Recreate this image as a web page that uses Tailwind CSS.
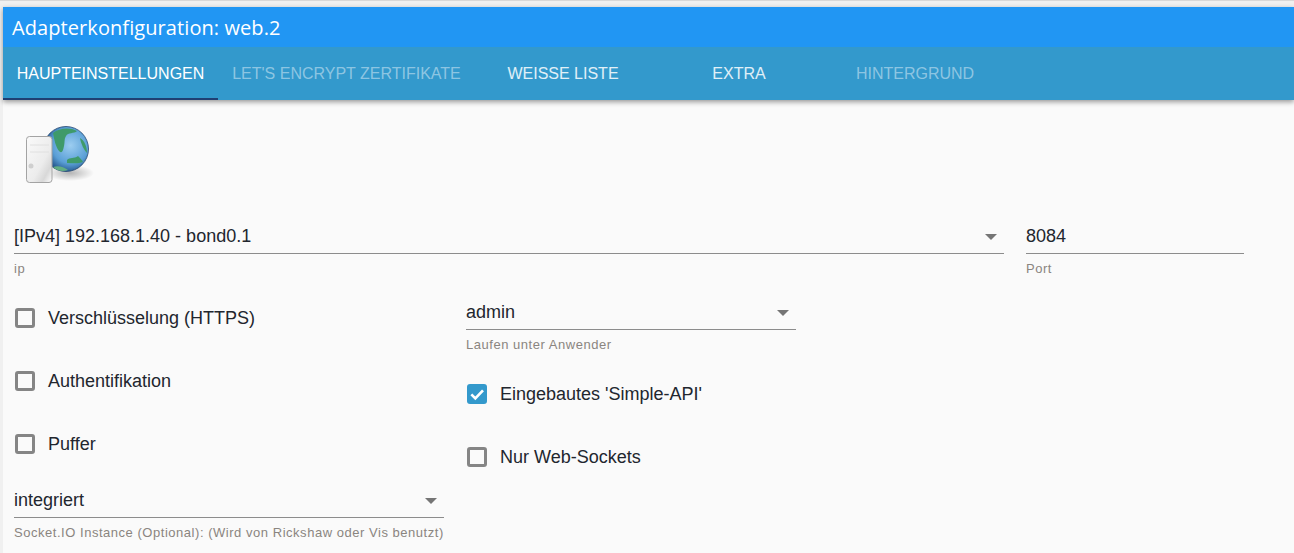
<!DOCTYPE html>
<html lang="en">
<head>
  <meta charset="UTF-8">
  <title>Adapterkonfiguration: web.2</title>
  <script src="https://cdn.jsdelivr.net/npm/@tailwindcss/browser@4"></script>
</head>
<body class="h-[553px] w-[1294px] overflow-hidden bg-[#f0f0f0] font-['Liberation_Sans',sans-serif] text-[#22262e]">
  <div class="h-[7px] border-t border-[#d8d8d8]"></div>
  <div class="ml-[3px] h-[546px] bg-[#fafafa]">
    <!-- Title and tabs -->
    <header class="relative shadow-[0_2px_5px_rgba(0,0,0,0.4)]">
      <div class="flex h-[40px] items-center bg-[#2196f3] pt-[1px] pl-[9px] font-['Open_Sans',sans-serif] text-[20px] tracking-[0.08px] text-white">Adapterkonfiguration: web.2</div>
      <nav class="flex h-[53px] bg-[#3399cc] text-center text-[16px]">
        <a class="flex w-[215px] items-center justify-center border-b-2 border-[#1f3f73] pt-[2px] text-white">HAUPTEINSTELLUNGEN</a>
        <a class="flex w-[257px] items-center justify-center text-white/45">LET'S ENCRYPT ZERTIFIKATE</a>
        <a class="flex w-[176px] items-center justify-center text-white/85">WEISSE LISTE</a>
        <a class="flex w-[176px] items-center justify-center text-white/85">EXTRA</a>
        <a class="flex w-[176px] items-center justify-center text-white/45">HINTERGRUND</a>
      </nav>
    </header>

    <!-- Adapter logo -->
    <div class="pl-[17px] pt-[24px]">
      <svg class="h-[64px] w-[76px]" viewBox="0 0 76 64">
        <defs>
          <radialGradient id="sea" cx="0.6" cy="0.42" r="0.62">
            <stop offset="0" stop-color="#9ccdf0"/>
            <stop offset="0.65" stop-color="#5a9fd6"/>
            <stop offset="1" stop-color="#1f4f85"/>
          </radialGradient>
          <linearGradient id="box" x1="0" y1="0" x2="1" y2="1">
            <stop offset="0" stop-color="#fafafa"/>
            <stop offset="0.6" stop-color="#ececec"/>
            <stop offset="0.8" stop-color="#d8d8d8"/>
            <stop offset="1" stop-color="#fdfdfd"/>
          </linearGradient>
          <radialGradient id="drop">
            <stop offset="0" stop-color="#000" stop-opacity="0.28"/>
            <stop offset="1" stop-color="#000" stop-opacity="0"/>
          </radialGradient>
        </defs>
        <ellipse cx="50" cy="49" rx="24" ry="8" fill="url(#drop)"/>
        <circle cx="46" cy="25" r="22.5" fill="url(#sea)" stroke="#23456e" stroke-width="0.8"/>
        <path d="M33 9 C39 4 50 3 57 7 C54 10 48 8 46 12 C44 15 45 18 44 22 C43 27 42 30 39 27 C36 24 34 15 33 9 Z" fill="#3f9a6a"/>
        <path d="M47 36 C50 33 54 35 58 32 C60 34 62 36 63 38 C58 40 52 39 47 39 Z" fill="#3f9a6a"/>
        <path d="M60 14 C64 16 67 22 67 29 C64 26 61 20 60 14 Z" fill="#3f9a6a"/>
        <path d="M33 43 C38 41 44 43 48 46 C43 48 37 47 33 43 Z" fill="#62ad82"/>
        <rect x="6.5" y="12.5" width="25.5" height="46" rx="3" fill="url(#box)" stroke="#a3a3a3"/>
        <path d="M10 21 H29 M10 28 H29" stroke="#e0e0e0"/>
        <circle cx="11" cy="42" r="2.5" fill="#cfcfcf"/>
      </svg>
    </div>

    <!-- IP and port -->
    <div class="mt-[35px] flex pl-[11px]">
      <div class="w-[990px]">
        <div class="flex h-[31px] items-center justify-between border-b border-[#8c8c8c] pb-[3px] pr-[7px] text-[18px]">
          <span>[IPv4] 192.168.1.40 - bond0.1</span>
          <span class="h-0 w-0 border-x-[6px] border-t-[6px] border-x-transparent border-t-[#757575]"></span>
        </div>
        <p class="mt-[5px] text-[13px] leading-[19px] tracking-[0.53px] text-[#8a8580]">ip</p>
      </div>
      <div class="ml-[22px] w-[218px]">
        <div class="flex h-[31px] items-center border-b border-[#8c8c8c] pb-[3px] text-[18px]">8084</div>
        <p class="mt-[5px] text-[13px] leading-[19px] tracking-[0.53px] text-[#8a8580]">Port</p>
      </div>
    </div>

    <!-- Two option columns -->
    <div class="mt-[21px] flex pl-[11px]">
      <div class="w-[430px]">
        <label class="flex h-[63px] items-start pl-[1px] pt-[9px] text-[18px]">
          <span class="h-[20px] w-[20px] rounded-[3px] border-[3px] border-[#858585]"></span>
          <span class="ml-[13px] leading-[20px]">Verschlüsselung (HTTPS)</span>
        </label>
        <label class="flex h-[63px] items-start pl-[1px] pt-[9px] text-[18px]">
          <span class="h-[20px] w-[20px] rounded-[3px] border-[3px] border-[#858585]"></span>
          <span class="ml-[13px] leading-[20px]">Authentifikation</span>
        </label>
        <label class="flex h-[62px] items-start pl-[1px] pt-[9px] text-[18px]">
          <span class="h-[20px] w-[20px] rounded-[3px] border-[3px] border-[#858585]"></span>
          <span class="ml-[13px] leading-[20px]">Puffer</span>
        </label>
        <div class="flex h-[31px] items-center justify-between border-b border-[#8c8c8c] pb-[3px] pr-[7px] text-[18px]">
          <span>integriert</span>
          <span class="h-0 w-0 border-x-[6px] border-t-[6px] border-x-transparent border-t-[#757575]"></span>
        </div>
        <p class="mt-[5px] whitespace-nowrap text-[13px] leading-[19px] tracking-[0.53px] text-[#8a8580]">Socket.IO Instance (Optional): (Wird von Rickshaw oder Vis benutzt)</p>
      </div>
      <div class="ml-[22px] w-[330px]">
        <div class="flex h-[31px] items-center justify-between border-b border-[#8c8c8c] pb-[3px] pr-[7px] text-[18px]">
          <span>admin</span>
          <span class="h-0 w-0 border-x-[6px] border-t-[6px] border-x-transparent border-t-[#757575]"></span>
        </div>
        <p class="mt-[5px] text-[13px] leading-[19px] tracking-[0.53px] text-[#8a8580]">Laufen unter Anwender</p>
        <label class="mt-[30px] flex h-[63px] items-start pl-[1px] text-[18px]">
          <span class="flex h-[20px] w-[20px] items-center justify-center rounded-[3px] bg-[#3399cc]">
            <svg class="h-[16px] w-[16px]" viewBox="0 0 24 24" fill="none" stroke="#fff" stroke-width="4"><path d="M3.5 12.5 L9.5 18.5 L21 6.5"/></svg>
          </span>
          <span class="ml-[13px] leading-[20px]">Eingebautes 'Simple-API'</span>
        </label>
        <label class="flex items-start pl-[1px] text-[18px]">
          <span class="h-[20px] w-[20px] rounded-[3px] border-[3px] border-[#858585]"></span>
          <span class="ml-[13px] leading-[20px]">Nur Web-Sockets</span>
        </label>
      </div>
    </div>
  </div>
</body>
</html>
